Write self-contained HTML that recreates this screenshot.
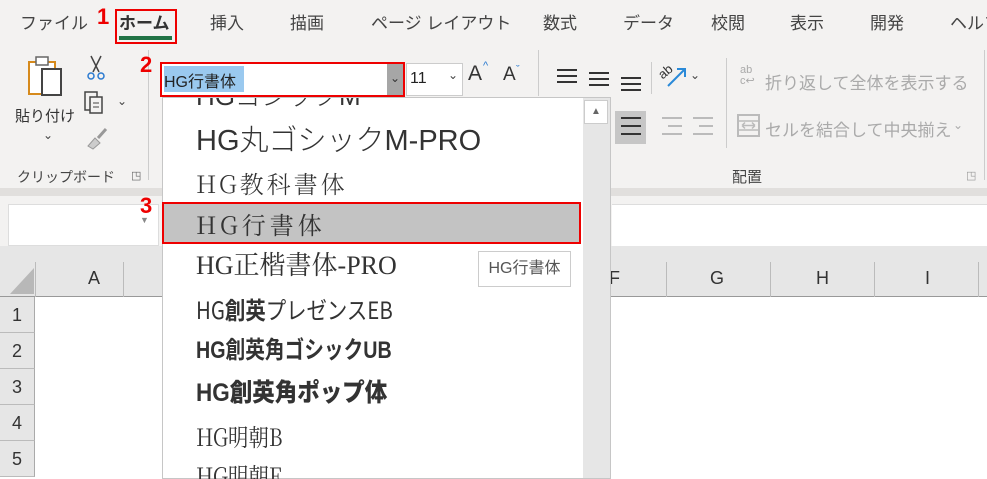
<!DOCTYPE html>
<html><head><meta charset="utf-8">
<style>
*{margin:0;padding:0;box-sizing:border-box}
body{width:987px;height:479px;overflow:hidden;position:relative;background:#fff;font-family:"Liberation Sans","Noto Sans CJK JP",sans-serif;color:#444}
.a{position:absolute;white-space:nowrap}
.tab{top:9px;font-size:17px;color:#444}
.g{color:#aaa}
.item{left:196px;font-size:27px;color:#333;line-height:30px}
.num{font-size:22px;font-weight:bold;color:#e00}
.rh{left:0;width:35px;height:36px;background:#e6e6e6;border-bottom:1px solid #bbb;font-size:18px;color:#333;text-align:center;line-height:36px;border-right:1px solid #aaa}
.ln{position:absolute;height:2px;background:#333}
.lg{position:absolute;height:2px;background:#bbb}
</style></head><body>
<div class="a" style="left:0;top:0;width:987px;height:190px;background:#f3f2f1"></div>
<div class="a" style="left:0;top:188px;width:987px;height:8px;background:#e1dfdd"></div>
<div class="a" style="left:0;top:196px;width:987px;height:52px;background:#f3f2f1"></div>
<div class="a tab" style="left:20px">ファイル</div>
<div class="a tab" style="left:119px;font-weight:bold;color:#333">ホーム</div>
<div class="a" style="left:115px;top:9px;width:62px;height:35px;border:2px solid #e00"></div>
<div class="a" style="left:119px;top:36px;width:53px;height:4px;background:#217346"></div>
<div class="a num" style="left:97px;top:4px">1</div>
<div class="a tab" style="left:210px">挿入</div>
<div class="a tab" style="left:290px">描画</div>
<div class="a tab" style="left:371px">ページ レイアウト</div>
<div class="a tab" style="left:543px">数式</div>
<div class="a tab" style="left:623px">データ</div>
<div class="a tab" style="left:711px">校閲</div>
<div class="a tab" style="left:790px">表示</div>
<div class="a tab" style="left:870px">開発</div>
<div class="a tab" style="left:950px">ヘルプ</div>

<svg class="a" style="left:26px;top:54px" width="48" height="48"><rect x="3" y="8" width="26" height="32" fill="#fff" stroke="#d68a1c" stroke-width="2"/><rect x="10" y="3" width="12" height="8" fill="#fff" stroke="#666" stroke-width="1.5"/><rect x="16" y="15" width="19" height="26" fill="#fff" stroke="#444" stroke-width="2"/></svg>
<div class="a" style="left:15px;top:105px;font-size:15px;color:#333">貼り付け</div>
<div class="a" style="left:43px;top:128px;font-size:12px;color:#444">⌄</div>
<svg class="a" style="left:86px;top:54px" width="20" height="28"><path d="M5 2 L13 18 M15 2 L7 18" stroke="#444" stroke-width="1.5" fill="none"/><circle cx="5" cy="22" r="3" fill="none" stroke="#2a7ad0" stroke-width="1.5"/><circle cx="15" cy="22" r="3" fill="none" stroke="#2a7ad0" stroke-width="1.5"/></svg>
<svg class="a" style="left:83px;top:90px" width="24" height="26"><rect x="2" y="2" width="12" height="18" fill="none" stroke="#444" stroke-width="1.5"/><rect x="7" y="7" width="12" height="16" fill="#f3f2f1" stroke="#444" stroke-width="1.5"/><path d="M10 13h6M10 17h6" stroke="#444"/></svg>
<div class="a" style="left:117px;top:94px;font-size:12px">⌄</div>
<svg class="a" style="left:85px;top:126px" width="24" height="24"><path d="M3 20 L10 12 L15 17 L8 23Z" fill="#ccc" stroke="#999"/><path d="M13 12 L21 3" stroke="#999" stroke-width="3"/></svg>
<div class="a" style="left:17px;top:167px;font-size:14px;color:#444">クリップボード</div>
<div class="a" style="left:131px;top:169px;font-size:11px;color:#666">◳</div>
<div class="a" style="left:148px;top:50px;width:1px;height:130px;background:#ccc"></div>

<div class="a num" style="left:140px;top:52px">2</div>
<div class="a" style="left:160px;top:62px;width:245px;height:35px;border:2px solid #e00;background:#fff"></div>
<div class="a" style="left:164px;top:66px;width:80px;height:26px;background:#9ac9ef"></div>
<div class="a" style="left:164px;top:68px;font-size:16px;color:#222">HG行書体</div>
<div class="a" style="left:387px;top:64px;width:16px;height:31px;background:#a6a6a6;color:#333;font-size:12px;text-align:center;line-height:28px">⌄</div>
<div class="a" style="left:406px;top:63px;width:57px;height:33px;border:1px solid #ccc;background:#fff"></div>
<div class="a" style="left:410px;top:70px;font-size:16px;color:#222">11</div>
<div class="a" style="left:448px;top:68px;font-size:12px">⌄</div>
<div class="a" style="left:468px;top:62px;font-size:21px;color:#333">A</div>
<div class="a" style="left:483px;top:60px;font-size:11px;color:#2a7ad0">^</div>
<div class="a" style="left:503px;top:64px;font-size:19px;color:#333">A</div>
<div class="a" style="left:516px;top:64px;font-size:11px;color:#2a7ad0">ˇ</div>
<div class="a" style="left:538px;top:50px;width:1px;height:46px;background:#ccc"></div>

<div class="ln" style="left:557px;top:69px;width:20px"></div><div class="ln" style="left:557px;top:75px;width:20px"></div><div class="ln" style="left:557px;top:81px;width:20px"></div>
<div class="ln" style="left:589px;top:72px;width:20px"></div><div class="ln" style="left:589px;top:78px;width:20px"></div><div class="ln" style="left:589px;top:84px;width:20px"></div>
<div class="ln" style="left:621px;top:77px;width:20px"></div><div class="ln" style="left:621px;top:83px;width:20px"></div><div class="ln" style="left:621px;top:89px;width:20px"></div>
<div class="a" style="left:651px;top:62px;width:1px;height:32px;background:#ccc"></div>
<div class="a" style="left:658px;top:64px;font-size:13px;color:#333;transform:rotate(-40deg)">ab</div>
<svg class="a" style="left:665px;top:64px" width="24" height="26"><path d="M3 22 L19 6 M12 5 L20 5 L20 13" stroke="#2a8ad8" stroke-width="2" fill="none"/></svg>
<div class="a" style="left:690px;top:68px;font-size:12px">⌄</div>
<div class="a" style="left:615px;top:111px;width:31px;height:33px;background:#c6c6c6"></div>
<div class="ln" style="left:621px;top:117px;width:20px"></div><div class="ln" style="left:621px;top:125px;width:20px"></div><div class="ln" style="left:621px;top:133px;width:20px"></div>
<div class="lg" style="left:662px;top:117px;width:20px"></div><div class="lg" style="left:668px;top:125px;width:14px"></div><div class="lg" style="left:662px;top:133px;width:20px"></div>
<div class="lg" style="left:693px;top:117px;width:20px"></div><div class="lg" style="left:699px;top:125px;width:14px"></div><div class="lg" style="left:693px;top:133px;width:20px"></div>
<div class="a" style="left:726px;top:58px;width:1px;height:90px;background:#ccc"></div>
<div class="a g" style="left:740px;top:65px;font-size:11px;line-height:11px">ab<br>c↩</div>
<div class="a g" style="left:765px;top:69px;font-size:17px">折り返して全体を表示する</div>
<svg class="a" style="left:737px;top:114px" width="24" height="24"><rect x="1" y="1" width="21" height="21" fill="none" stroke="#bbb" stroke-width="2"/><path d="M1 7h21M1 16h21M5 11.5h13M5 11.5l3-3M5 11.5l3 3M18 11.5l-3-3M18 11.5l-3 3" stroke="#bbb" stroke-width="1.5" fill="none"/></svg>
<div class="a g" style="left:765px;top:116px;font-size:17px">セルを結合して中央揃え</div>
<div class="a g" style="left:953px;top:118px;font-size:12px">⌄</div>
<div class="a" style="left:732px;top:166px;font-size:15px;color:#444">配置</div>
<div class="a" style="left:966px;top:169px;font-size:11px;color:#999">◳</div>
<div class="a" style="left:984px;top:50px;width:1px;height:130px;background:#ccc"></div>

<div class="a" style="left:8px;top:204px;width:151px;height:42px;background:#fff;border:1px solid #ddd"></div>
<div class="a" style="left:140px;top:215px;font-size:9px;color:#888">▼</div>
<div class="a" style="left:612px;top:204px;width:375px;height:42px;background:#fff;border-top:1px solid #ddd"></div>
<div class="a" style="left:0;top:246px;width:987px;height:16px;background:#e6e6e6"></div>

<div class="a" style="left:0;top:262px;width:987px;height:35px;background:#e6e6e6;border-bottom:1px solid #999"></div>
<svg class="a" style="left:10px;top:268px" width="24" height="26"><path d="M24 0 L24 26 L0 26Z" fill="#b8b8b8"/></svg>
<div class="a" style="left:35px;top:262px;width:1px;height:35px;background:#bbb"></div>
<div class="a" style="left:123px;top:262px;width:1px;height:35px;background:#bbb"></div>
<div class="a" style="left:88px;top:268px;font-size:18px;color:#333">A</div>
<div class="a" style="left:609px;top:268px;font-size:18px;color:#333">F</div>
<div class="a" style="left:666px;top:262px;width:1px;height:35px;background:#bbb"></div>
<div class="a" style="left:710px;top:268px;font-size:18px;color:#333">G</div>
<div class="a" style="left:770px;top:262px;width:1px;height:35px;background:#bbb"></div>
<div class="a" style="left:816px;top:268px;font-size:18px;color:#333">H</div>
<div class="a" style="left:874px;top:262px;width:1px;height:35px;background:#bbb"></div>
<div class="a" style="left:925px;top:268px;font-size:18px;color:#333">I</div>
<div class="a" style="left:978px;top:262px;width:1px;height:35px;background:#bbb"></div>
<div class="a rh" style="top:297px">1</div>
<div class="a rh" style="top:333px">2</div>
<div class="a rh" style="top:369px">3</div>
<div class="a rh" style="top:405px">4</div>
<div class="a rh" style="top:441px">5</div>

<div class="a" style="left:162px;top:97px;width:449px;height:382px;background:#fff;border:1px solid #c6c6c6;overflow:hidden">
  <div class="a" style="left:420px;top:0;width:27px;height:382px;background:#e6e6e6"></div>
  <div class="a" style="left:421px;top:2px;width:24px;height:24px;background:#fff;border:1px solid #ccc;font-size:10px;color:#666;text-align:center;line-height:22px">▲</div>
</div>
<div class="a" style="left:162px;top:202px;width:419px;height:42px;background:#c3c3c3;border:2px solid #e00"></div>
<div class="a num" style="left:140px;top:193px">3</div>
<div class="a" style="left:478px;top:251px;width:93px;height:36px;background:#fff;border:1px solid #ccc;font-size:16px;color:#555;line-height:34px;text-align:center">HG行書体</div>
<div class="a" style="left:163px;top:98px;width:419px;height:381px;overflow:hidden">
<div class="a item" style="left:33px;top:-17px;font-size:26px;font-weight:300">HGゴシックM</div>
<div class="a item" style="left:33px;top:28px;font-size:29px;font-weight:300">HG丸ゴシックM-PRO</div>
<div class="a item" style="left:33px;top:70px;font-size:24px;letter-spacing:3px;font-family:'Noto Serif CJK SC','Liberation Serif',serif;font-weight:300">HG教科書体</div>
<div class="a item" style="left:33px;top:111px;font-size:24px;letter-spacing:4px;font-family:'Noto Serif CJK SC',serif">HG行書体</div>
<div class="a item" style="left:33px;top:153px;font-size:26px;font-family:'Liberation Serif','Noto Serif CJK SC',serif">HG正楷書体-PRO</div>
<div class="a item" style="left:33px;top:196px;font-size:24px;transform:scaleX(.85);transform-origin:left;font-family:'Noto Sans CJK JP',sans-serif">HG<b>創英</b>プレゼンスEB</div>
<div class="a item" style="left:33px;top:238px;font-size:24px;font-weight:bold;transform:scaleX(.82);transform-origin:left">HG創英角ゴシックUB</div>
<div class="a item" style="left:33px;top:280px;font-size:25px;font-weight:900;transform:scaleX(.9);transform-origin:left">HG創英角ポップ体</div>
<div class="a item" style="left:33px;top:323px;font-size:24px;font-family:'Noto Serif CJK SC','Liberation Serif',serif;transform:scaleX(.85);transform-origin:left">HG明朝B</div>
<div class="a item" style="left:33px;top:362px;font-size:24px;font-family:'Noto Serif CJK SC','Liberation Serif',serif;transform:scaleX(.85);transform-origin:left">HG明朝E</div>
</div>
</body></html>
